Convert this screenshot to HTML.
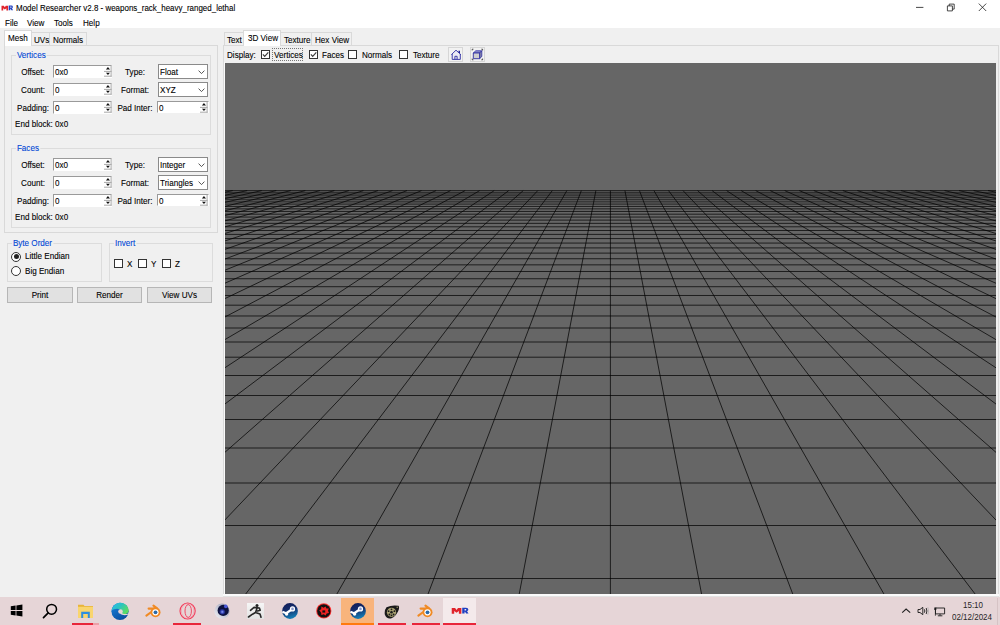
<!DOCTYPE html>
<html><head><meta charset="utf-8">
<style>
html,body{margin:0;padding:0}
body{width:1000px;height:625px;overflow:hidden;position:relative;background:#f0f0f0;font-family:"Liberation Sans",sans-serif;font-size:8px;color:#000}
.a{position:absolute}
.t{position:absolute;white-space:nowrap;line-height:10px;height:10px;font-size:9px;transform:scaleX(.9);transform-origin:0 0;-webkit-text-stroke:0.1px currentColor}
.c{text-align:center;transform-origin:50% 0}
.grp{position:absolute;border:1px solid #dcdcdc;box-sizing:border-box}
.gt{position:absolute;white-space:nowrap;line-height:10px;font-size:9px;color:#0046d5;background:#f0f0f0;padding:0 1px;transform:scaleX(.9);transform-origin:0 0;-webkit-text-stroke:0.1px currentColor}
.inp{position:absolute;background:#fff;border:1px solid #9a9a9a;box-sizing:border-box;border-right-color:#fff;border-bottom-color:#fff}
.cmb{position:absolute;background:#fff;border:1px solid #8a8a8a;box-sizing:border-box}
.btn{position:absolute;background:#e1e1e1;border:1px solid #b6b6b6;box-sizing:border-box;text-align:center;line-height:14px}
.chk{position:absolute;width:9px;height:9px;border:1px solid #333;box-sizing:border-box;background:#fff}
.tab{position:absolute;border:1px solid #d9d9d9;border-bottom:none;box-sizing:border-box;background:#f0f0f0}
.tabsel{background:#fff}
</style></head><body>
<!-- title bar -->
<div class="a" style="left:0;top:0;width:1000px;height:28px;background:#fff"></div>
<svg class="a" style="left:1px;top:4.5px" width="12" height="6" viewBox="0 0 12 6"><path d="M0.5 5.4V0.8H2.8L3.8 2.3L4.8 0.8H7.1V5.4H5.4V3.2L3.8 4.6L2.2 3.2V5.4Z" fill="#e0242c"/><path d="M7.7 5.2V0.6H10.3Q11.9 0.6 11.9 2Q11.9 3 11 3.3L12 5.2H10.4L9.6 3.7H9.3V5.2Z M9.3 1.6V2.7H10.1Q10.5 2.7 10.5 2.15Q10.5 1.6 10.1 1.6Z" fill="#2040c0" fill-rule="evenodd"/></svg>
<div class="t" style="left:16px;top:3px;transform:scaleX(.885)">Model Researcher v2.8 - weapons_rack_heavy_ranged_lethal</div>
<!-- window controls -->
<svg class="a" style="left:912px;top:0" width="80" height="16" viewBox="0 0 80 16"><g stroke="#1a1a1a" stroke-width="0.8" fill="none"><path d="M4 7.4H11.4"/><path d="M35.4 5.9H40.4V10.9H35.4Z M37.2 5.9V4.1H42.2V9.1H40.4"/><path d="M66.8 3.6L74.2 11M74.2 3.6L66.8 11"/></g></svg>
<!-- menu -->
<div class="t" style="left:5px;top:17.5px">File</div>
<div class="t" style="left:27px;top:17.5px">View</div>
<div class="t" style="left:54px;top:17.5px">Tools</div>
<div class="t" style="left:83px;top:17.5px">Help</div>

<!-- LEFT TAB CONTROL -->
<div class="a" style="left:4px;top:45px;width:214px;height:188px;border:1px solid #d9d9d9;box-sizing:border-box"></div>
<div class="tab" style="left:31px;top:32px;width:19px;height:13px"></div>
<div class="tab" style="left:49px;top:32px;width:38px;height:13px"></div>
<div class="tab tabsel" style="left:4px;top:30px;width:28px;height:16px"></div>
<div class="t" style="left:7.5px;top:33px">Mesh</div>
<div class="t" style="left:33.5px;top:34.7px">UVs</div>
<div class="t" style="left:52.5px;top:34.7px">Normals</div>

<div class="grp" style="left:11px;top:55px;width:200px;height:80px"></div>
<div class="gt" style="left:16px;top:49.7px">Vertices</div>
<div class="t c" style="left:12.8px;top:67px;width:40px">Offset:</div>
<div class="inp" style="left:53px;top:65px;width:59px;height:13px"></div>
<div class="t" style="left:55px;top:67px">0x0</div>
<svg class="a" style="left:103px;top:65px" width="10" height="13" viewBox="0 0 10 13"><path d="M1 6.4H8.6M8.1 0.5V11.7M1 11.2H8.6" stroke="#a8a8a8" stroke-width="1" fill="none"/><path d="M2.9 4.5H7L4.95 2.1Z M2.9 7.7H7L4.95 10.1Z" fill="#111"/></svg>
<div class="t c" style="left:114.7px;top:67px;width:40px">Type:</div>
<div class="cmb" style="left:158px;top:64.4px;width:50px;height:14.2px"></div>
<div class="t" style="left:160.3px;top:67px">Float</div>
<svg class="a" style="left:197.8px;top:70.3px" width="8" height="5" viewBox="0 0 8 5"><path d="M0.6 0.6L3.5 3.6L6.4 0.6" stroke="#444" stroke-width="0.9" fill="none"/></svg>
<div class="t c" style="left:12.8px;top:85px;width:40px">Count:</div>
<div class="inp" style="left:53px;top:83px;width:59px;height:13px"></div>
<div class="t" style="left:55px;top:85px">0</div>
<svg class="a" style="left:103px;top:83px" width="10" height="13" viewBox="0 0 10 13"><path d="M1 6.4H8.6M8.1 0.5V11.7M1 11.2H8.6" stroke="#a8a8a8" stroke-width="1" fill="none"/><path d="M2.9 4.5H7L4.95 2.1Z M2.9 7.7H7L4.95 10.1Z" fill="#111"/></svg>
<div class="t c" style="left:114.7px;top:85px;width:40px">Format:</div>
<div class="cmb" style="left:158px;top:82.4px;width:50px;height:14.2px"></div>
<div class="t" style="left:160.3px;top:85px">XYZ</div>
<svg class="a" style="left:197.8px;top:88.3px" width="8" height="5" viewBox="0 0 8 5"><path d="M0.6 0.6L3.5 3.6L6.4 0.6" stroke="#444" stroke-width="0.9" fill="none"/></svg>
<div class="t c" style="left:12.8px;top:102.5px;width:40px">Padding:</div>
<div class="inp" style="left:53px;top:100.5px;width:59px;height:13px"></div>
<div class="t" style="left:55px;top:102.5px">0</div>
<svg class="a" style="left:103px;top:100.5px" width="10" height="13" viewBox="0 0 10 13"><path d="M1 6.4H8.6M8.1 0.5V11.7M1 11.2H8.6" stroke="#a8a8a8" stroke-width="1" fill="none"/><path d="M2.9 4.5H7L4.95 2.1Z M2.9 7.7H7L4.95 10.1Z" fill="#111"/></svg>
<div class="t c" style="left:114.7px;top:102.5px;width:40px">Pad Inter:</div>
<div class="inp" style="left:156.5px;top:100.5px;width:52px;height:12.5px"></div>
<div class="t" style="left:158.5px;top:102.5px">0</div>
<svg class="a" style="left:199px;top:100.5px" width="10" height="13" viewBox="0 0 10 13"><path d="M1 6.4H8.6M8.1 0.5V11.7M1 11.2H8.6" stroke="#a8a8a8" stroke-width="1" fill="none"/><path d="M2.9 4.5H7L4.95 2.1Z M2.9 7.7H7L4.95 10.1Z" fill="#111"/></svg>
<div class="t" style="left:14.5px;top:118.6px">End block: 0x0</div>
<div class="grp" style="left:11px;top:148px;width:200px;height:80px"></div>
<div class="gt" style="left:16px;top:142.7px">Faces</div>
<div class="t c" style="left:12.8px;top:160px;width:40px">Offset:</div>
<div class="inp" style="left:53px;top:158px;width:59px;height:13px"></div>
<div class="t" style="left:55px;top:160px">0x0</div>
<svg class="a" style="left:103px;top:158px" width="10" height="13" viewBox="0 0 10 13"><path d="M1 6.4H8.6M8.1 0.5V11.7M1 11.2H8.6" stroke="#a8a8a8" stroke-width="1" fill="none"/><path d="M2.9 4.5H7L4.95 2.1Z M2.9 7.7H7L4.95 10.1Z" fill="#111"/></svg>
<div class="t c" style="left:114.7px;top:160px;width:40px">Type:</div>
<div class="cmb" style="left:158px;top:157.4px;width:50px;height:14.2px"></div>
<div class="t" style="left:160.3px;top:160px">Integer</div>
<svg class="a" style="left:197.8px;top:163.3px" width="8" height="5" viewBox="0 0 8 5"><path d="M0.6 0.6L3.5 3.6L6.4 0.6" stroke="#444" stroke-width="0.9" fill="none"/></svg>
<div class="t c" style="left:12.8px;top:178px;width:40px">Count:</div>
<div class="inp" style="left:53px;top:176px;width:59px;height:13px"></div>
<div class="t" style="left:55px;top:178px">0</div>
<svg class="a" style="left:103px;top:176px" width="10" height="13" viewBox="0 0 10 13"><path d="M1 6.4H8.6M8.1 0.5V11.7M1 11.2H8.6" stroke="#a8a8a8" stroke-width="1" fill="none"/><path d="M2.9 4.5H7L4.95 2.1Z M2.9 7.7H7L4.95 10.1Z" fill="#111"/></svg>
<div class="t c" style="left:114.7px;top:178px;width:40px">Format:</div>
<div class="cmb" style="left:158px;top:175.4px;width:50px;height:14.2px"></div>
<div class="t" style="left:160.3px;top:178px">Triangles</div>
<svg class="a" style="left:197.8px;top:181.3px" width="8" height="5" viewBox="0 0 8 5"><path d="M0.6 0.6L3.5 3.6L6.4 0.6" stroke="#444" stroke-width="0.9" fill="none"/></svg>
<div class="t c" style="left:12.8px;top:195.5px;width:40px">Padding:</div>
<div class="inp" style="left:53px;top:193.5px;width:59px;height:13px"></div>
<div class="t" style="left:55px;top:195.5px">0</div>
<svg class="a" style="left:103px;top:193.5px" width="10" height="13" viewBox="0 0 10 13"><path d="M1 6.4H8.6M8.1 0.5V11.7M1 11.2H8.6" stroke="#a8a8a8" stroke-width="1" fill="none"/><path d="M2.9 4.5H7L4.95 2.1Z M2.9 7.7H7L4.95 10.1Z" fill="#111"/></svg>
<div class="t c" style="left:114.7px;top:195.5px;width:40px">Pad Inter:</div>
<div class="inp" style="left:156.5px;top:193.5px;width:52px;height:12.5px"></div>
<div class="t" style="left:158.5px;top:195.5px">0</div>
<svg class="a" style="left:199px;top:193.5px" width="10" height="13" viewBox="0 0 10 13"><path d="M1 6.4H8.6M8.1 0.5V11.7M1 11.2H8.6" stroke="#a8a8a8" stroke-width="1" fill="none"/><path d="M2.9 4.5H7L4.95 2.1Z M2.9 7.7H7L4.95 10.1Z" fill="#111"/></svg>
<div class="t" style="left:14.5px;top:211.6px">End block: 0x0</div>

<!-- Byte order -->
<div class="grp" style="left:7px;top:243px;width:95px;height:39px"></div>
<div class="gt" style="left:11.5px;top:238px">Byte Order</div>
<div class="a" style="left:11px;top:251.5px;width:10px;height:10px;border-radius:50%;border:1px solid #333;box-sizing:border-box;background:#fff"></div>
<div class="a" style="left:13.5px;top:254px;width:5px;height:5px;border-radius:50%;background:#222"></div>
<div class="a" style="left:11px;top:266px;width:10px;height:10px;border-radius:50%;border:1px solid #333;box-sizing:border-box;background:#fff"></div>
<div class="t" style="left:24.5px;top:251.4px">Little Endian</div>
<div class="t" style="left:24.5px;top:266.2px">Big Endian</div>

<!-- Invert -->
<div class="grp" style="left:109px;top:243px;width:104px;height:39px"></div>
<div class="gt" style="left:113.5px;top:238px">Invert</div>
<div class="chk" style="left:114px;top:259px"></div>
<div class="t" style="left:126.5px;top:258.7px">X</div>
<div class="chk" style="left:138px;top:259px"></div>
<div class="t" style="left:150.5px;top:258.7px">Y</div>
<div class="chk" style="left:162px;top:259px"></div>
<div class="t" style="left:175px;top:258.7px">Z</div>

<div class="btn" style="left:7px;top:287px;width:66px;height:16px"></div>
<div class="t c" style="left:7px;top:290.3px;width:66px">Print</div>
<div class="btn" style="left:77px;top:287px;width:65px;height:16px"></div>
<div class="t c" style="left:77px;top:290.3px;width:65px">Render</div>
<div class="btn" style="left:147px;top:287px;width:65px;height:16px"></div>
<div class="t c" style="left:147px;top:290.3px;width:65px">View UVs</div>

<!-- RIGHT TAB CONTROL -->
<div class="a" style="left:223px;top:45px;width:776px;height:560px;border:1px solid #d9d9d9;box-sizing:border-box"></div>
<div class="tab" style="left:224px;top:32px;width:21px;height:13px"></div>
<div class="tab" style="left:280px;top:32px;width:32px;height:13px"></div>
<div class="tab" style="left:311px;top:32px;width:41px;height:13px"></div>
<div class="tab tabsel" style="left:243px;top:30px;width:38px;height:16px"></div>
<div class="t" style="left:227px;top:34.7px">Text</div>
<div class="t" style="left:247.5px;top:33px">3D View</div>
<div class="t" style="left:283.5px;top:34.7px">Texture</div>
<div class="t" style="left:315px;top:34.7px">Hex View</div>

<div class="t" style="left:226.8px;top:49.7px">Display:</div>
<div class="chk" style="left:261px;top:50px"></div>
<svg class="a" style="left:261px;top:50px" width="9" height="9" viewBox="0 0 9 9"><path d="M1.9 4.4L3.7 6.4L7.3 2.4" stroke="#3c3c3c" stroke-width="1.15" fill="none"/></svg>
<div class="a" style="left:272px;top:48px;width:31px;height:13px;border:1px dotted #777;box-sizing:border-box"></div>
<div class="t" style="left:273.5px;top:49.7px">Vertices</div>
<div class="chk" style="left:309px;top:50px"></div>
<svg class="a" style="left:309px;top:50px" width="9" height="9" viewBox="0 0 9 9"><path d="M1.9 4.4L3.7 6.4L7.3 2.4" stroke="#3c3c3c" stroke-width="1.15" fill="none"/></svg>
<div class="t" style="left:322px;top:49.7px">Faces</div>
<div class="chk" style="left:348px;top:50px"></div>
<div class="t" style="left:361.5px;top:49.7px">Normals</div>
<div class="chk" style="left:399px;top:50px"></div>
<div class="t" style="left:412.5px;top:49.7px">Texture</div>
<div class="a" style="left:447.5px;top:47px;width:15px;height:15px;background:#f2f2f2;border:1px solid #d6d6d6;box-sizing:border-box"></div>
<svg class="a" style="left:447.5px;top:47px" width="15" height="15" viewBox="0 0 15 15"><path d="M4.3 7V12.3H12.2V7L8.2 3.4Z" fill="#ececf4"/><path d="M3.4 7.6L8 3.2L12.8 7.6M4.2 7V12.4H12.3V7M6.9 12.4V9.3H9.1V12.4" stroke="#2c2ca0" stroke-width="0.9" fill="none"/><path d="M10.4 4.2H11.4V6" stroke="#1a1a90" stroke-width="1.1" fill="none"/></svg>
<div class="a" style="left:470.3px;top:47px;width:14.5px;height:15px;background:#f2f2f2;border:1px solid #d6d6d6;box-sizing:border-box"></div>
<svg class="a" style="left:470.3px;top:47px" width="15" height="15" viewBox="0 0 15 15"><path d="M3.3 6L5.8 3.8H11.8L9.6 6Z" fill="#9a9ad0" stroke="#2c2ca0" stroke-width="0.8"/><path d="M9.6 6L11.8 3.8V9.5L9.6 11.7Z" fill="#8888a8" stroke="#2c2ca0" stroke-width="0.8"/><path d="M3.3 6H9.6V11.7H3.3Z" fill="#cfcfcf" stroke="#2c2ca0" stroke-width="0.9"/><path d="M2.2 3.4V2.2H3.4M11.4 2.2H12.6V3.4M12.6 11.6V12.8H11.4M3.4 12.8H2.2V11.6" stroke="#333" stroke-width="0.9" fill="none"/></svg>

<!-- viewport -->
<div class="a" style="left:223px;top:594px;width:776px;height:2px;background:#fafafa"></div>
<div class="a" style="left:223px;top:596px;width:776px;height:1px;background:#e2e2e2"></div>
<div class="a" style="left:224px;top:62px;width:1px;height:532px;background:#fafafa"></div>
<div class="a" style="left:225px;top:63px;width:771px;height:531px;background:#666;overflow:hidden"><svg width="772" height="532" viewBox="0 0 772 532" style="position:absolute;left:0;top:0"><g stroke="#000" stroke-width="0.72"><line x1="0" y1="515.500" x2="772" y2="515.500"/><line x1="0" y1="462.500" x2="772" y2="462.500"/><line x1="0" y1="420.000" x2="772" y2="420.000"/><line x1="0" y1="385.000" x2="772" y2="385.000"/><line x1="0" y1="356.500" x2="772" y2="356.500"/><line x1="0" y1="332.500" x2="772" y2="332.500"/><line x1="0" y1="312.500" x2="772" y2="312.500"/><line x1="0" y1="294.200" x2="772" y2="294.200"/><line x1="0" y1="279.000" x2="772" y2="279.000"/><line x1="0" y1="265.000" x2="772" y2="265.000"/><line x1="0" y1="252.972" x2="772" y2="252.972"/><line x1="0" y1="242.172" x2="772" y2="242.172"/><line x1="0" y1="232.469" x2="772" y2="232.469"/><line x1="0" y1="223.704" x2="772" y2="223.704"/><line x1="0" y1="215.747" x2="772" y2="215.747"/><line x1="0" y1="208.492" x2="772" y2="208.492"/><line x1="0" y1="201.849" x2="772" y2="201.849"/><line x1="0" y1="195.744" x2="772" y2="195.744"/><line x1="0" y1="190.115" x2="772" y2="190.115"/><line x1="0" y1="184.908" x2="772" y2="184.908"/><line x1="0" y1="180.077" x2="772" y2="180.077"/><line x1="0" y1="175.582" x2="772" y2="175.582"/><line x1="0" y1="171.391" x2="772" y2="171.391"/><line x1="0" y1="167.472" x2="772" y2="167.472"/><line x1="0" y1="163.801" x2="772" y2="163.801"/><line x1="0" y1="160.355" x2="772" y2="160.355"/><line x1="0" y1="157.113" x2="772" y2="157.113"/><line x1="0" y1="154.058" x2="772" y2="154.058"/><line x1="0" y1="151.174" x2="772" y2="151.174"/><line x1="0" y1="148.447" x2="772" y2="148.447"/><line x1="0" y1="145.866" x2="772" y2="145.866"/><line x1="0" y1="143.417" x2="772" y2="143.417"/><line x1="0" y1="141.092" x2="772" y2="141.092"/><line x1="0" y1="138.881" x2="772" y2="138.881"/><line x1="0" y1="136.777" x2="772" y2="136.777"/><line x1="0" y1="134.771" x2="772" y2="134.771"/><line x1="0" y1="132.857" x2="772" y2="132.857"/><line x1="0" y1="131.028" x2="772" y2="131.028"/><line x1="0" y1="129.280" x2="772" y2="129.280"/><line x1="0" y1="127.606" x2="772" y2="127.606"/></g><g stroke="#000" stroke-width="0.72"><line x1="7.68" y1="127.61" x2="-2508.73" y2="637.00"/><line x1="22.21" y1="127.61" x2="-2397.42" y2="637.00"/><line x1="36.73" y1="127.61" x2="-2286.10" y2="637.00"/><line x1="51.26" y1="127.61" x2="-2174.79" y2="637.00"/><line x1="65.79" y1="127.61" x2="-2063.48" y2="637.00"/><line x1="80.32" y1="127.61" x2="-1952.17" y2="637.00"/><line x1="94.84" y1="127.61" x2="-1840.85" y2="637.00"/><line x1="109.37" y1="127.61" x2="-1729.54" y2="637.00"/><line x1="123.90" y1="127.61" x2="-1618.23" y2="637.00"/><line x1="138.43" y1="127.61" x2="-1506.91" y2="637.00"/><line x1="152.96" y1="127.61" x2="-1395.60" y2="637.00"/><line x1="167.48" y1="127.61" x2="-1284.29" y2="637.00"/><line x1="182.01" y1="127.61" x2="-1172.98" y2="637.00"/><line x1="196.54" y1="127.61" x2="-1061.66" y2="637.00"/><line x1="211.07" y1="127.61" x2="-950.35" y2="637.00"/><line x1="225.59" y1="127.61" x2="-839.04" y2="637.00"/><line x1="240.12" y1="127.61" x2="-727.73" y2="637.00"/><line x1="254.65" y1="127.61" x2="-616.41" y2="637.00"/><line x1="269.18" y1="127.61" x2="-505.10" y2="637.00"/><line x1="283.71" y1="127.61" x2="-393.79" y2="637.00"/><line x1="298.23" y1="127.61" x2="-282.48" y2="637.00"/><line x1="312.76" y1="127.61" x2="-171.16" y2="637.00"/><line x1="327.29" y1="127.61" x2="-59.85" y2="637.00"/><line x1="341.82" y1="127.61" x2="51.46" y2="637.00"/><line x1="356.34" y1="127.61" x2="162.77" y2="637.00"/><line x1="370.87" y1="127.61" x2="274.09" y2="637.00"/><line x1="385.40" y1="127.61" x2="385.40" y2="637.00"/><line x1="399.93" y1="127.61" x2="496.71" y2="637.00"/><line x1="414.46" y1="127.61" x2="608.03" y2="637.00"/><line x1="428.98" y1="127.61" x2="719.34" y2="637.00"/><line x1="443.51" y1="127.61" x2="830.65" y2="637.00"/><line x1="458.04" y1="127.61" x2="941.96" y2="637.00"/><line x1="472.57" y1="127.61" x2="1053.28" y2="637.00"/><line x1="487.09" y1="127.61" x2="1164.59" y2="637.00"/><line x1="501.62" y1="127.61" x2="1275.90" y2="637.00"/><line x1="516.15" y1="127.61" x2="1387.21" y2="637.00"/><line x1="530.68" y1="127.61" x2="1498.53" y2="637.00"/><line x1="545.21" y1="127.61" x2="1609.84" y2="637.00"/><line x1="559.73" y1="127.61" x2="1721.15" y2="637.00"/><line x1="574.26" y1="127.61" x2="1832.46" y2="637.00"/><line x1="588.79" y1="127.61" x2="1943.78" y2="637.00"/><line x1="603.32" y1="127.61" x2="2055.09" y2="637.00"/><line x1="617.84" y1="127.61" x2="2166.40" y2="637.00"/><line x1="632.37" y1="127.61" x2="2277.71" y2="637.00"/><line x1="646.90" y1="127.61" x2="2389.03" y2="637.00"/><line x1="661.43" y1="127.61" x2="2500.34" y2="637.00"/><line x1="675.96" y1="127.61" x2="2611.65" y2="637.00"/><line x1="690.48" y1="127.61" x2="2722.97" y2="637.00"/><line x1="705.01" y1="127.61" x2="2834.28" y2="637.00"/><line x1="719.54" y1="127.61" x2="2945.59" y2="637.00"/><line x1="734.07" y1="127.61" x2="3056.90" y2="637.00"/><line x1="748.59" y1="127.61" x2="3168.22" y2="637.00"/><line x1="763.12" y1="127.61" x2="3279.53" y2="637.00"/></g></svg></div>

<!-- TASKBAR -->
<div class="a" style="left:0;top:597px;width:1000px;height:28px;background:#e6d5d7"></div>
<!-- windows logo -->
<svg class="a" style="left:10px;top:604px" width="13" height="13" viewBox="0 0 13 13"><path d="M0.8 2.2L5.6 1.5V6.1H0.8Z M6.4 1.4L12.4 0.6V6.1H6.4Z M0.8 6.9H5.6V11.5L0.8 10.8Z M6.4 6.9H12.4V12.4L6.4 11.6Z" fill="#000"/></svg>
<!-- search -->
<svg class="a" style="left:41px;top:602px" width="18" height="18" viewBox="0 0 18 18"><circle cx="10.6" cy="7.3" r="4.9" stroke="#000" stroke-width="1.5" fill="none"/><path d="M7.2 10.8L2.5 15.6" stroke="#000" stroke-width="1.7" stroke-linecap="round"/></svg>
<!-- explorer -->
<svg class="a" style="left:77px;top:604px" width="17" height="15" viewBox="0 0 17 15"><path d="M1 0.8H6.5L7.5 2H16V14H1Z" fill="#e8b43a"/><rect x="1" y="2.8" width="15" height="11.2" fill="#f9d56e"/><path d="M4.2 7.8H12.8V14H10.8V10H6.2V14H4.2Z" fill="#2e8fe0"/></svg>
<div class="a" style="left:72px;top:623px;width:21px;height:2px;background:#e8263a"></div><div class="a" style="left:93px;top:623px;width:6px;height:2px;background:#eca0a8"></div>
<!-- edge -->
<svg class="a" style="left:110.5px;top:602px" width="18" height="18" viewBox="0 0 18 18"><defs><linearGradient id="eg" x1="0" y1="0" x2="1" y2="0.6"><stop offset="0" stop-color="#30b8f0"/><stop offset="0.5" stop-color="#2ac4c0"/><stop offset="1" stop-color="#5cdc60"/></linearGradient><linearGradient id="eb" x1="0" y1="0" x2="0.6" y2="1"><stop offset="0" stop-color="#1a86e0"/><stop offset="1" stop-color="#0a4ea0"/></linearGradient></defs>
<circle cx="9" cy="9.3" r="8.6" fill="url(#eb)"/>
<path d="M0.6 8.5C1.5 3 6 0.7 9.5 0.7C14.5 0.7 17.6 4.5 17.6 8.5C17.6 11 15.6 12.2 13 12.2C10.8 12.2 9 11.2 9 9.5C9 8.5 9.8 7.6 8.8 7.2C6 6 2.5 7 0.6 8.5Z" fill="url(#eg)"/>
<circle cx="9.5" cy="9.5" r="2.3" fill="#e6d5d7"/><path d="M9 11.8C11 13.4 15 13.6 17.4 12.4L17.6 11.2C15.5 12.4 12 12.4 10.5 10.8Z" fill="#e6d5d7"/></svg>
<!-- blender -->
<svg class="a" style="left:145px;top:604px" width="17" height="15" viewBox="0 0 17 15"><circle cx="10.5" cy="8.3" r="5" fill="#f08a24"/><path d="M1.4 11.6L7 7.5M3.6 4.6L10 4.6M8.5 1.6L11.8 4" stroke="#f08a24" stroke-width="2.1" stroke-linecap="round"/><circle cx="10.5" cy="8.3" r="3.1" fill="#fff"/><circle cx="10.5" cy="8.3" r="1.9" fill="#2b6aa8"/></svg>
<!-- opera -->
<svg class="a" style="left:179px;top:602px" width="18" height="18" viewBox="0 0 18 18"><ellipse cx="8.6" cy="9" rx="7.6" ry="8" stroke="#f23a58" stroke-width="1.1" fill="none"/><ellipse cx="8.6" cy="9" rx="6.3" ry="7.3" stroke="#f6899a" stroke-width="0.5" fill="none"/><ellipse cx="9.2" cy="9" rx="3.2" ry="6.4" stroke="#f23a58" stroke-width="0.9" fill="none"/></svg>
<div class="a" style="left:173px;top:623px;width:28px;height:2px;background:#e8263a"></div>
<!-- cinema4d -->
<svg class="a" style="left:213.5px;top:602.5px" width="17" height="17" viewBox="0 0 17 17"><defs><radialGradient id="cg" cx="0.45" cy="0.6" r="0.5"><stop offset="0" stop-color="#8fa0ff"/><stop offset="0.5" stop-color="#3040b0"/><stop offset="1" stop-color="#0a0f40"/></radialGradient><linearGradient id="cs" x1="0" y1="1" x2="1" y2="0"><stop offset="0" stop-color="#f4f4f8"/><stop offset="0.5" stop-color="#c4c6d4"/><stop offset="1" stop-color="#8a8ea8"/></linearGradient></defs><circle cx="8" cy="8.2" r="7.6" fill="url(#cs)"/><circle cx="9.2" cy="7.4" r="5.6" fill="#0c1240"/><circle cx="8.6" cy="8.2" r="3.4" fill="url(#cg)"/><circle cx="11.8" cy="3.4" r="1.8" fill="#4a58d8"/></svg>
<!-- zbrush -->
<svg class="a" style="left:247px;top:603px" width="17" height="16" viewBox="0 0 17 16"><defs><linearGradient id="zg" x1="0" y1="0" x2="0" y2="1"><stop offset="0" stop-color="#f6f6f6"/><stop offset="1" stop-color="#e2e2e2"/></linearGradient></defs><rect width="17" height="16" fill="url(#zg)"/><circle cx="10" cy="2.4" r="1.5" fill="#222"/><path d="M3.5 7.3L7 4.4L12.4 5L13.2 7.2L10.5 8M10 5.3L8.5 9.5L13 11L14 14.2M8.5 9.5L5.5 11.2L1.5 14" stroke="#282828" stroke-width="1.6" fill="none" stroke-linecap="round" stroke-linejoin="round"/></svg>
<!-- steam -->
<svg class="a" style="left:281.5px;top:603px" width="16" height="16" viewBox="0 0 16 16"><defs><linearGradient id="sg" x1="0" y1="0" x2="0.3" y2="1"><stop offset="0" stop-color="#121a55"/><stop offset="0.5" stop-color="#142e6c"/><stop offset="1" stop-color="#1478b0"/></linearGradient></defs><circle cx="8" cy="8" r="7.9" fill="url(#sg)"/><circle cx="10.5" cy="5.9" r="2.6" fill="#fff"/><circle cx="10.5" cy="5.9" r="1.3" fill="#8a9acc"/><path d="M0.4 8.8L4.2 10.2L9 7" stroke="#fff" stroke-width="2.2" fill="none"/><circle cx="4.6" cy="11" r="1.7" fill="#fff"/></svg>
<!-- gears/red -->
<svg class="a" style="left:315.5px;top:603px" width="16" height="16" viewBox="0 0 16 16"><circle cx="7.8" cy="7.9" r="7.6" fill="#ff3030"/><circle cx="7.8" cy="7.9" r="6.7" fill="#121212"/><path d="M3.2 7.2L5.2 6.2L5.4 3.6L7.6 4.8L9.6 3.4L10.4 5.6L12.8 5.4L12 7.8L13 10L10.6 10.4L9.6 12.6L7.8 11.2L5.4 12L5.2 9.8Z" fill="#f02424"/><path d="M6.4 7.4H9.2V9.6H6.4Z" fill="#121212"/></svg>
<!-- steam active -->
<div class="a" style="left:341px;top:597.5px;width:33px;height:27.5px;background:#f8b47c"></div>
<div class="a" style="left:341px;top:623px;width:33px;height:2px;background:#ff7a10"></div>
<svg class="a" style="left:349.8px;top:603px" width="16" height="16" viewBox="0 0 16 16"><circle cx="8" cy="8" r="7.9" fill="url(#sg)"/><circle cx="10.5" cy="5.9" r="2.6" fill="#fff"/><circle cx="10.5" cy="5.9" r="1.3" fill="#8a9acc"/><path d="M0.4 8.8L4.2 10.2L9 7" stroke="#fff" stroke-width="2.2" fill="none"/><circle cx="4.6" cy="11" r="1.7" fill="#fff"/></svg>
<!-- sfm -->
<svg class="a" style="left:384px;top:604.5px" width="16" height="14" viewBox="0 0 16 14"><path d="M2.5 2.2Q8 -0.3 14.6 0.8Q15.8 3 14 6.5Q11.5 11.5 7.5 13.2Q2.5 14.2 0.8 9.5Q0.2 5 2.5 2.2Z" fill="#1a1a1a"/><circle cx="7.5" cy="7.3" r="4.6" fill="#a8a070"/><circle cx="7.5" cy="7.3" r="1.3" fill="#1a1a1a"/><circle cx="7.5" cy="4.3" r="0.9" fill="#1a1a1a"/><circle cx="7.5" cy="10.3" r="0.9" fill="#1a1a1a"/><circle cx="4.6" cy="6.2" r="0.9" fill="#1a1a1a"/><circle cx="10.4" cy="6.2" r="0.9" fill="#1a1a1a"/><circle cx="5.4" cy="9.5" r="0.9" fill="#1a1a1a"/><circle cx="9.6" cy="9.5" r="0.9" fill="#1a1a1a"/><circle cx="13.2" cy="2.2" r="0.7" fill="#a8a070"/></svg>
<div class="a" style="left:377.5px;top:623px;width:28px;height:2px;background:#e8263a"></div>
<!-- blender 2 -->
<svg class="a" style="left:417px;top:603.5px" width="17" height="15" viewBox="0 0 17 15"><circle cx="10.5" cy="8.3" r="5" fill="#f08a24"/><path d="M1.4 11.6L7 7.5M3.6 4.6L10 4.6M8.5 1.6L11.8 4" stroke="#f08a24" stroke-width="2.1" stroke-linecap="round"/><circle cx="10.5" cy="8.3" r="3.1" fill="#fff"/><circle cx="10.5" cy="8.3" r="1.9" fill="#2b6aa8"/></svg>
<div class="a" style="left:412px;top:623px;width:27.5px;height:2px;background:#e8263a"></div>
<!-- MR active -->
<div class="a" style="left:443px;top:597.5px;width:33px;height:27.5px;background:#f4eaeb"></div>
<div class="a" style="left:443px;top:623px;width:33px;height:2px;background:#e8263a"></div>
<svg class="a" style="left:451px;top:606.6px" width="17.5" height="7.6" viewBox="0 0 12 6" preserveAspectRatio="none"><path d="M0.5 5.4V0.8H2.8L3.8 2.3L4.8 0.8H7.1V5.4H5.4V3.2L3.8 4.6L2.2 3.2V5.4Z" fill="#e0242c"/><path d="M7.7 5.2V0.6H10.3Q11.9 0.6 11.9 2Q11.9 3 11 3.3L12 5.2H10.4L9.6 3.7H9.3V5.2Z M9.3 1.6V2.7H10.1Q10.5 2.7 10.5 2.15Q10.5 1.6 10.1 1.6Z" fill="#2040c0" fill-rule="evenodd"/></svg>
<!-- tray -->
<svg class="a" style="left:901px;top:607px" width="11" height="7" viewBox="0 0 11 7"><path d="M1.2 5.6L5.1 2L9.2 5.6" stroke="#222" stroke-width="1.1" fill="none"/></svg>
<svg class="a" style="left:916.5px;top:606px" width="12" height="10" viewBox="0 0 12 10"><path d="M1 3.5H3L5.8 1.3V8.7L3 6.5H1Z" stroke="#1a1a1a" stroke-width="0.9" fill="none"/><path d="M7.4 3.3Q8.3 5 7.4 6.7M9.2 2Q10.6 5 9.2 8" stroke="#1a1a1a" stroke-width="0.9" fill="none"/><path d="M10.8 1.2Q12.4 5 10.8 8.8" stroke="#aaa" stroke-width="0.7" fill="none"/></svg>
<svg class="a" style="left:934px;top:606.5px" width="12" height="10" viewBox="0 0 12 10"><path d="M1.5 1H10.6V6.9H1.5Z M6 6.9V8.5M3.8 8.8H8.4" stroke="#1a1a1a" stroke-width="0.9" fill="none"/><path d="M0.3 0.5H2.3V3H0.3Z" fill="#1a1a1a"/><path d="M1.4 3V8.7" stroke="#1a1a1a" stroke-width="0.8"/></svg>
<div class="t" style="left:963px;top:600px;font-size:8.5px;transform:scaleX(.94);color:#262626;-webkit-text-stroke:0">15:10</div>
<div class="t" style="left:952px;top:612.2px;font-size:8.5px;transform:scaleX(.94);color:#262626;-webkit-text-stroke:0">02/12/2024</div>
<div class="a" style="left:996.5px;top:598px;width:1px;height:27px;background:#d6c3c5"></div>


</body></html>
